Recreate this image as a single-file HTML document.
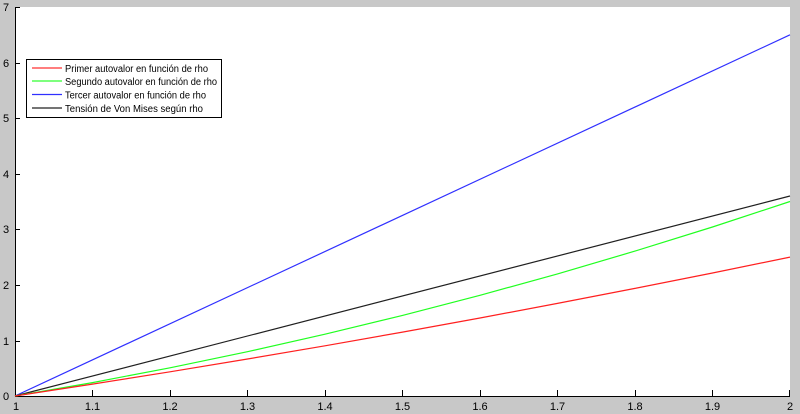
<!DOCTYPE html>
<html><head><style>
html,body{margin:0;padding:0;background:#c8c8c8;}
svg{display:block;font-family:"Liberation Sans",Arial,sans-serif;}
</style></head><body>
<svg width="800" height="414" xmlns="http://www.w3.org/2000/svg">
<rect x="0" y="0" width="800" height="414" fill="#c8c8c8"/>
<rect x="15" y="7" width="775" height="389" fill="#fff"/>
<g stroke="#000" stroke-width="1" fill="none">
<line x1="15.5" y1="7" x2="15.5" y2="396"/>
<line x1="15" y1="396.5" x2="790" y2="396.5"/>
<path d="M15 7.5h5M15 63.5h5M15 118.5h5M15 174.5h5M15 229.5h5M15 285.5h5M15 341.5h5
M92.5 396v-6M170.5 396v-6M247.5 396v-6M325.5 396v-6M402.5 396v-6M480.5 396v-6M557.5 396v-6M635.5 396v-6M712.5 396v-6M789.5 396v-6"/>
</g>
<g font-size="11" fill="#000">
<text x="3" y="11">7</text><text x="3" y="67">6</text><text x="3" y="122">5</text><text x="3" y="178">4</text><text x="3" y="233">3</text><text x="3" y="289">2</text><text x="3" y="345">1</text><text x="3" y="400">0</text>
<g text-anchor="middle">
<text x="16" y="410">1</text><text x="92.5" y="410">1.1</text><text x="170" y="410">1.2</text><text x="247.5" y="410">1.3</text><text x="325" y="410">1.4</text><text x="402.5" y="410">1.5</text><text x="480" y="410">1.6</text><text x="557.5" y="410">1.7</text><text x="635" y="410">1.8</text><text x="712.5" y="410">1.9</text><text x="790" y="410">2</text>
</g></g>
<g fill="none" stroke-width="1.2">
<polyline stroke="#3030ff" points="15,396 790,34.8"/>
<polyline stroke="#202020" points="15,396 790,196"/>
<polyline stroke="#20ff20" points="15,396 92.5,382.6 170,367.8 247.5,351.7 325,334.2 402.5,315.4 480,295.3 557.5,273.9 635,251.1 712.5,227 790,201.5"/>
<polyline stroke="#ff2020" points="15,396 92.5,384.1 170,371.8 247.5,359 325,345.8 402.5,332.1 480,318 557.5,303.4 635,288.4 712.5,273 790,257.1"/>
</g>
<rect x="26.5" y="59.5" width="195" height="58" fill="#fff" stroke="#000"/>
<g stroke-width="1.2">
<line x1="32" y1="68" x2="62" y2="68" stroke="#ff3030"/>
<line x1="32" y1="81" x2="62" y2="81" stroke="#30ff30"/>
<line x1="32" y1="94.5" x2="62" y2="94.5" stroke="#3030ff"/>
<line x1="32" y1="108" x2="62" y2="108" stroke="#202020"/>
</g>
<g font-size="10" fill="#000">
<text x="65" y="72" textLength="143" lengthAdjust="spacingAndGlyphs">Primer autovalor en función de rho</text>
<text x="65" y="85" textLength="152" lengthAdjust="spacingAndGlyphs">Segundo autovalor en función de rho</text>
<text x="65" y="98.5" textLength="141" lengthAdjust="spacingAndGlyphs">Tercer autovalor en función de rho</text>
<text x="65" y="112" textLength="138" lengthAdjust="spacingAndGlyphs">Tensión de Von Mises según rho</text>
</g>
</svg>
</body></html>
